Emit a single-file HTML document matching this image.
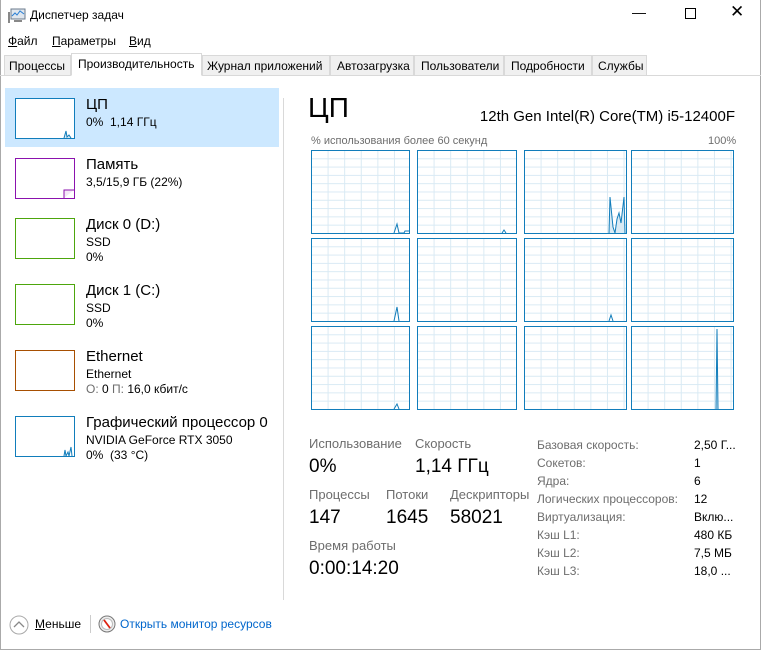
<!DOCTYPE html><html><head><meta charset="utf-8"><style>
*{margin:0;padding:0;box-sizing:border-box}
body{width:761px;height:650px;background:#fff;font-family:"Segoe UI","Liberation Sans","DejaVu Sans",sans-serif;font-size:12px;color:#000;position:relative;overflow:hidden}
.a{position:absolute;white-space:nowrap}
.tab{position:absolute;top:55px;height:21px;border:1px solid #d9d9d9;background:#f0f0f0;font-size:12px;padding:3px 0 0 4px}
.th{position:absolute;left:15px;width:60px;height:41px;border:1px solid}
.g{position:absolute;width:100px;height:84px;border:1px solid #117dbb;background-color:#fff;
background-image:linear-gradient(#d9eaf4 1px,transparent 1px),linear-gradient(90deg,#d9eaf4 1px,transparent 1px);
background-size:100% 8.3px,16.6px 100%;background-position:0 -1px,-1px 0}
.lbl{color:#6d6d6d;font-size:13px}
.val{font-size:19px}
.rl{color:#6d6d6d;font-size:12px}
</style></head><body>
<div style="position:absolute;inset:0;border:1px solid #aaa;border-top:none"></div>
<svg class="a" style="left:8px;top:8px" width="18" height="16"><rect x="3" y="1" width="14" height="10" fill="#dfe6ee" stroke="#6b7b8c"/><polyline points="4,8 7,5 9,7 12,3 16,6" fill="none" stroke="#2a7fd4"/><rect x="0" y="4" width="2" height="11" fill="#888"/><rect x="6" y="12" width="8" height="2" fill="#888"/></svg>
<div class="a" style="left:30px;top:8px;font-size:12px">Диспетчер задач</div>
<div class="a" style="left:632px;top:4px;font-size:14px">&#8212;</div>
<div class="a" style="left:685px;top:8px;width:11px;height:11px;border:1px solid #000"></div>
<div class="a" style="left:730px;top:2px;font-size:17px;font-weight:300">&#10005;</div>
<div class="a" style="left:8px;top:34px"><u>Ф</u>айл</div>
<div class="a" style="left:52px;top:34px"><u>П</u>араметры</div>
<div class="a" style="left:129px;top:34px"><u>В</u>ид</div>
<div class="a" style="left:0;top:75px;width:761px;height:1px;background:#d9d9d9"></div>
<div class="tab" style="left:4px;width:67px">Процессы</div>
<div class="tab" style="left:71px;top:53px;height:23px;width:131px;background:#fff;border-bottom-color:#fff;padding-top:3px;padding-left:6px">Производительность</div>
<div class="tab" style="left:202px;width:128px">Журнал приложений</div>
<div class="tab" style="left:330px;width:84px;padding-left:6px">Автозагрузка</div>
<div class="tab" style="left:414px;width:90px;padding-left:6px">Пользователи</div>
<div class="tab" style="left:504px;width:88px;padding-left:6px">Подробности</div>
<div class="tab" style="left:592px;width:55px;padding-left:5px">Службы</div>

<div class="a" style="left:5px;top:88px;width:274px;height:59px;background:#cce8ff"></div>
<div class="a" style="left:283px;top:98px;width:1px;height:502px;background:#d9d9d9"></div>

<div class="th" style="top:98px;border-color:#117dbb;background:#fff"><svg width="58" height="39" style="position:absolute;left:0;top:0"><polyline points="48,39 50,32 51,38 53,36 55,39" fill="#d9eaf4" stroke="#117dbb"/></svg></div>
<div class="a" style="left:86px;top:96px;font-size:15px">ЦП</div>
<div class="a" style="left:86px;top:115px">0%&nbsp; 1,14 ГГц</div>

<div class="th" style="top:158px;border-color:#8b12ae"><svg width="58" height="39" style="position:absolute;left:0;top:0"><polyline points="48,39 48,31 58,31" fill="#f4e8f7" stroke="#8b12ae"/></svg></div>
<div class="a" style="left:86px;top:156px;font-size:15px">Память</div>
<div class="a" style="left:86px;top:175px">3,5/15,9 ГБ (22%)</div>

<div class="th" style="top:218px;border-color:#4da60c"></div>
<div class="a" style="left:86px;top:216px;font-size:15px">Диск 0 (D:)</div>
<div class="a" style="left:86px;top:235px">SSD</div>
<div class="a" style="left:86px;top:250px">0%</div>

<div class="th" style="top:284px;border-color:#4da60c"></div>
<div class="a" style="left:86px;top:282px;font-size:15px">Диск 1 (C:)</div>
<div class="a" style="left:86px;top:301px">SSD</div>
<div class="a" style="left:86px;top:316px">0%</div>

<div class="th" style="top:350px;border-color:#a74f01"></div>
<div class="a" style="left:86px;top:348px;font-size:15px">Ethernet</div>
<div class="a" style="left:86px;top:367px">Ethernet</div>
<div class="a" style="left:86px;top:382px"><span style="color:#6d6d6d">О:</span> 0 <span style="color:#6d6d6d">П:</span> 16,0 кбит/с</div>

<div class="th" style="top:416px;border-color:#117dbb"><svg width="58" height="39" style="position:absolute;left:0;top:0"><polyline points="48,39 49,33 50,39 52,35 53,39 55,30 56,39" fill="none" stroke="#117dbb"/></svg></div>
<div class="a" style="left:86px;top:414px;font-size:15px">Графический процессор 0</div>
<div class="a" style="left:86px;top:433px">NVIDIA GeForce RTX 3050</div>
<div class="a" style="left:86px;top:448px">0%&nbsp; (33 °C)</div>

<div class="a" style="left:308px;top:92px;font-size:28px;font-weight:300">ЦП</div>
<div class="a" style="left:735px;top:108px;font-size:15px;transform:translateX(-100%)">12th Gen Intel(R) Core(TM) i5-12400F</div>
<div class="a lbl" style="left:311px;top:135px;font-size:11px">% использования более 60 секунд</div>
<div class="a lbl" style="left:708px;top:135px;font-size:11px">100%</div>

<div class="g" style="left:311px;top:150px;width:99px"><svg width="97" height="82"><polyline points="82,82 85,73 87,82 92,82 93,80 97,80" fill="none" stroke="#117dbb"/></svg></div>
<div class="g" style="left:417px;top:150px;width:100px"><svg width="98" height="82"><polyline points="84,82 86,79 88,82" fill="none" stroke="#117dbb"/></svg></div>
<div class="g" style="left:524px;top:150px;width:103px"><svg width="101" height="82"><polyline points="84,82 85,46 88,76 90,82 92,68 94,62 96,72 99,46 100,82" fill="#d9eaf4" stroke="#117dbb"/></svg></div>
<div class="g" style="left:631px;top:150px;width:103px"></div>
<div class="g" style="left:311px;top:238px;width:99px"><svg width="97" height="82"><polyline points="82,82 85,68 87,82" fill="none" stroke="#117dbb"/></svg></div>
<div class="g" style="left:417px;top:238px;width:100px"></div>
<div class="g" style="left:524px;top:238px;width:103px"><svg width="101" height="82"><polyline points="84,82 86,76 88,82" fill="none" stroke="#117dbb"/></svg></div>
<div class="g" style="left:631px;top:238px;width:103px"></div>
<div class="g" style="left:311px;top:326px;width:99px"><svg width="97" height="82"><polyline points="82,82 85,77 87,82" fill="none" stroke="#117dbb"/></svg></div>
<div class="g" style="left:417px;top:326px;width:100px"></div>
<div class="g" style="left:524px;top:326px;width:103px"></div>
<div class="g" style="left:631px;top:326px;width:103px"><svg width="101" height="82"><polyline points="84,82 85,2 86,82" fill="#d9eaf4" stroke="#117dbb"/></svg></div>

<div class="a lbl" style="left:309px;top:436px">Использование</div>
<div class="a lbl" style="left:415px;top:436px">Скорость</div>
<div class="a val" style="left:309px;top:456px">0%</div>
<div class="a val" style="left:415px;top:456px">1,14 ГГц</div>
<div class="a lbl" style="left:309px;top:487px">Процессы</div>
<div class="a lbl" style="left:386px;top:487px">Потоки</div>
<div class="a lbl" style="left:450px;top:487px">Дескрипторы</div>
<div class="a val" style="left:309px;top:507px">147</div>
<div class="a val" style="left:386px;top:507px">1645</div>
<div class="a val" style="left:450px;top:507px">58021</div>
<div class="a lbl" style="left:309px;top:538px">Время работы</div>
<div class="a val" style="left:309px;top:558px">0:00:14:20</div>

<div class="a rl" style="left:537px;top:436px;line-height:18px">Базовая скорость:<br>Сокетов:<br>Ядра:<br>Логических процессоров:<br>Виртуализация:<br>Кэш L1:<br>Кэш L2:<br>Кэш L3:</div>
<div class="a" style="left:694px;top:436px;line-height:18px">2,50 Г...<br>1<br>6<br>12<br>Вклю...<br>480 КБ<br>7,5 МБ<br>18,0 ...</div>

<svg class="a" style="left:9px;top:615px" width="20" height="20"><circle cx="10" cy="10" r="9" fill="#fff" stroke="#aaa"/><polyline points="5,12 10,7 15,12" fill="none" stroke="#888" stroke-width="1.3"/></svg>
<div class="a" style="left:35px;top:617px"><u>М</u>еньше</div>
<div class="a" style="left:90px;top:615px;width:1px;height:18px;background:#ccc"></div>
<svg class="a" style="left:98px;top:615px" width="18" height="18"><circle cx="9" cy="9" r="8" fill="#eee" stroke="#777"/><circle cx="9" cy="9" r="5.5" fill="#fff" stroke="#bbb"/><line x1="6" y1="5" x2="12" y2="13" stroke="#d21" stroke-width="1.8"/></svg>
<div class="a" style="left:120px;top:617px;color:#0066cc">Открыть монитор ресурсов</div>
</body></html>
